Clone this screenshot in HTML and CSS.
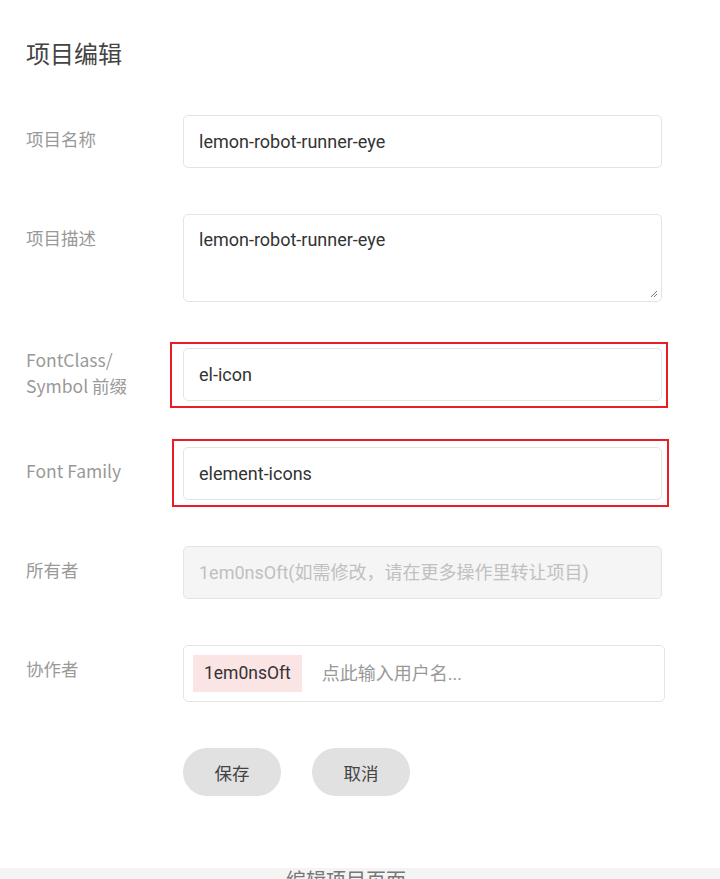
FILE: index.html
```html
<!DOCTYPE html>
<html lang="zh">
<head>
<meta charset="utf-8">
<link rel="stylesheet" href="styles.css">
</head>
<body>
<div class="page">
  <h1 class="title">项目编辑</h1>
  <form class="form">
    <div class="row">
      <label class="label">项目名称</label>
      <div class="field"><div class="input">lemon-robot-runner-eye</div></div>
    </div>
    <div class="row">
      <label class="label">项目描述</label>
      <div class="field">
        <div class="input textarea">lemon-robot-runner-eye
          <svg class="grip" width="10" height="10" viewBox="0 0 10 10"><path d="M9 3 L3 9 M9 6 L6 9" stroke="#777" stroke-width="1"/></svg>
        </div>
      </div>
    </div>
    <div class="row">
      <label class="label two">FontClass/<br>Symbol 前缀</label>
      <div class="field">
        <div class="input">el-icon</div>
        <span class="mark mark1"></span>
      </div>
    </div>
    <div class="row">
      <label class="label">Font Family</label>
      <div class="field">
        <div class="input">element-icons</div>
        <span class="mark mark2"></span>
      </div>
    </div>
    <div class="row">
      <label class="label">所有者</label>
      <div class="field"><div class="input disabled">1em0nsOft(如需修改，请在更多操作里转让项目)</div></div>
    </div>
    <div class="row">
      <label class="label">协作者</label>
      <div class="field"><div class="input tags"><span class="tag">1em0nsOft</span><span class="ph">点此输入用户名...</span></div></div>
    </div>
    <div class="row">
      <span></span>
      <div class="btns"><button type="button" class="btn">保存</button><button type="button" class="btn">取消</button></div>
    </div>
  </form>
</div>
<div class="footer"><span class="caption">编辑项目页面</span></div>
</body>
</html>
```

FILE: styles.css
```css
* { box-sizing: border-box; }
html, body { margin: 0; padding: 0; background: #fff; }
body {
  font-family: Roboto, "Noto Sans CJK SC", sans-serif;
  color: #333;
  overflow: hidden;
  height: 879px;
  position: relative;
}
.page { padding: 36px 0 0 26px; }
.title {
  margin: 0;
  font-family: "Noto Sans CJK SC", sans-serif;
  font-size: 24px;
  font-weight: 400;
  color: #444;
  line-height: 34px;
}
.form { margin-top: 45px; display: flex; flex-direction: column; gap: 46px; }
.row { display: grid; grid-template-columns: 157px 479px; align-items: start; }
.label {
  font-family: "Noto Sans CJK SC", sans-serif;
  font-size: 17.5px;
  color: #999;
  line-height: 26px;
  padding-top: 11px;
}
.label.two { padding-top: 0; margin-top: -1px; }
.field { position: relative; }
.input {
  height: 53px;
  border: 1px solid #e4e4e4;
  border-radius: 5px;
  padding: 0 15px;
  font-size: 18px;
  line-height: 51px;
  color: #333;
  white-space: nowrap;
  background: #fff;
}
.textarea { height: 88px; line-height: 26px; padding-top: 12px; position: relative; }
.grip { position: absolute; right: 3px; bottom: 3px; }
.disabled { background: #f5f5f5; color: #c0c0c0; }
.tags { height: 57px; display: flex; align-items: center; padding: 0 9px; width: 482px; }
.tag {
  background: #fbe4e4;
  color: #333;
  height: 37px;
  line-height: 37px;
  padding: 0 11px;
  font-size: 17.5px;
}
.ph { color: #999; margin-left: 20px; font-size: 18px; }
.mark {
  position: absolute;
  border: 2px solid #ec1c24;
  pointer-events: none;
}
.mark1 { left: -13px; right: -6px; top: -6px; bottom: -7px; }
.mark2 { left: -11px; right: -7px; top: -8px; bottom: -7px; }
.btns { display: flex; gap: 31px; }
.btn {
  width: 98px;
  height: 48px;
  border: none;
  border-radius: 24px;
  background: #e1e1e1;
  font-family: "Noto Sans CJK SC", sans-serif;
  font-size: 17.5px;
  color: #444;
}
.footer {
  position: absolute;
  left: 0; right: 0; top: 868px; bottom: 0;
  background: #f4f4f4;
  padding-left: 286px;
  overflow: hidden;
}
.caption {
  display: block;
  font-family: "Noto Sans CJK SC", sans-serif;
  font-size: 20px;
  line-height: 20px;
  color: #777;
  margin-top: 2px;
}
```
